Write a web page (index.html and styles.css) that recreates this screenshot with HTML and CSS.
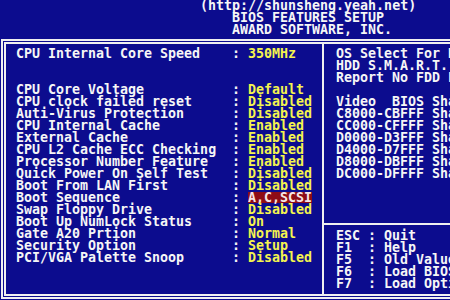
FILE: index.html
```html
<!DOCTYPE html>
<html lang="en">

<head>
  <meta charset="UTF-8">
  <title>BIOS Features Setup</title>
  <link rel="stylesheet" href="styles.css">
</head>

<body>
  <div class="header">
    <div class="url">(http://shunsheng.yeah.net)</div>
    <div class="title">BIOS FEATURES SETUP</div>
    <div class="title">AWARD SOFTWARE, INC.</div>
  </div>

  <div class="frame">
    <div class="inner">
      <!-- 左边 设置项 -->
      <div class="left">
        <div class="row"><span>CPU Internal Core Speed</span><span>:</span><span class="val">350MHz</span></div>
        <div class="list">
          <div class="row"><span>CPU Core Voltage</span><span>:</span><span class="val">Default</span></div>
          <div class="row"><span>CPU clock failed reset</span><span>:</span><span class="val">Disabled</span></div>
          <div class="row"><span>Auti-Virus Protection</span><span>:</span><span class="val">Disabled</span></div>
          <div class="row"><span>CPU Internal Cache</span><span>:</span><span class="val">Enabled</span></div>
          <div class="row"><span>External Cache</span><span>:</span><span class="val">Enabled</span></div>
          <div class="row"><span>CPU L2 Cache ECC Checking</span><span>:</span><span class="val">Enabled</span></div>
          <div class="row"><span>Processor Number Feature</span><span>:</span><span class="val">Enabled</span></div>
          <div class="row"><span>Quick Power On Self Test</span><span>:</span><span class="val">Disabled</span></div>
          <div class="row"><span>Boot From LAN First</span><span>:</span><span class="val">Disabled</span></div>
          <div class="row"><span>Boot Sequence</span><span>:</span><span class="val"><span class="sel">A,C,SCSI</span></span></div>
          <div class="row"><span>Swap Floppy Drive</span><span>:</span><span class="val">Disabled</span></div>
          <div class="row"><span>Boot Up NumLock Status</span><span>:</span><span class="val">On</span></div>
          <div class="row"><span>Gate A20 Prtion</span><span>:</span><span class="val">Normal</span></div>
          <div class="row"><span>Security Option</span><span>:</span><span class="val">Setup</span></div>
          <div class="row"><span>PCI/VGA Palette Snoop</span><span>:</span><span class="val">Disabled</span></div>
        </div>
      </div>

      <!-- 右边 说明 -->
      <div class="right">
        <div class="note">
          <div>OS Select For DRAM &gt; 64MB : Non-OS2</div>
          <div>HDD S.M.A.R.T. capability : Disabled</div>
          <div>Report No FDD For WIN 95  : No</div>
        </div>
        <div class="shadow">
          <div>Video  BIOS Shadow : Enabled</div>
          <div>C8000-CBFFF Shadow : Disabled</div>
          <div>CC000-CFFFF Shadow : Disabled</div>
          <div>D0000-D3FFF Shadow : Disabled</div>
          <div>D4000-D7FFF Shadow : Disabled</div>
          <div>D8000-DBFFF Shadow : Disabled</div>
          <div>DC000-DFFFF Shadow : Disabled</div>
        </div>
        <div class="keys">
          <div class="key"><span>ESC</span><span>:</span><span>Quit</span></div>
          <div class="key"><span>F1</span><span>:</span><span>Help</span></div>
          <div class="key"><span>F5</span><span>:</span><span>Old Values (Shift)F2 : Color</span></div>
          <div class="key"><span>F6</span><span>:</span><span>Load BIOS Defaults</span></div>
          <div class="key"><span>F7</span><span>:</span><span>Load Optimal Defaults</span></div>
        </div>
      </div>
    </div>
  </div>
</body>

</html>
```

FILE: styles.css
```css
* {
  padding: 0;
  margin: 0;
  box-sizing: border-box;
}

body {
  width: 450px;
  height: 300px;
  overflow: hidden;
  background-color: #0c0c8e;
  color: #f6f6f6;
  font-family: "DejaVu Sans Mono", "Liberation Mono", monospace;
  font-weight: bold;
  font-size: 13.3px;
  line-height: 12px;
  white-space: nowrap;
}

/* 顶部标题 */
.header .url {
  padding-left: 200px;
}

.header .title {
  padding-left: 232px;
}

/* 双线边框 */
.frame {
  width: 640px;
  margin: 3px 0 0 1px;
  border: 2px solid #f0f0f0;
  padding: 1px;
}

.inner {
  border: 2px solid #f0f0f0;
  height: 254px;
  display: grid;
  grid-template-columns: 316px 1fr;
}

.left {
  padding: 4px 0 4px 10px;
}

.list {
  margin-top: 24px;
}

.row {
  display: grid;
  grid-template-columns: 216px 16px auto;
}

.row .val {
  color: #f4f44e;
}

.row .sel {
  display: inline-block;
  height: 11px;
  background-color: #8e0c16;
  color: #f6e6e6;
}

.right {
  border-left: 2px solid #f0f0f0;
  padding: 4px 0;
  display: flex;
  flex-direction: column;
}

.note,
.shadow {
  padding-left: 12px;
}

.note div,
.shadow div {
  white-space: pre;
}

.shadow {
  margin-top: 12px;
}

.keys {
  margin-top: auto;
  border-top: 2px solid #f0f0f0;
  padding: 5px 0 0 12px;
}

.key {
  display: grid;
  grid-template-columns: 32px 16px auto;
}
```
